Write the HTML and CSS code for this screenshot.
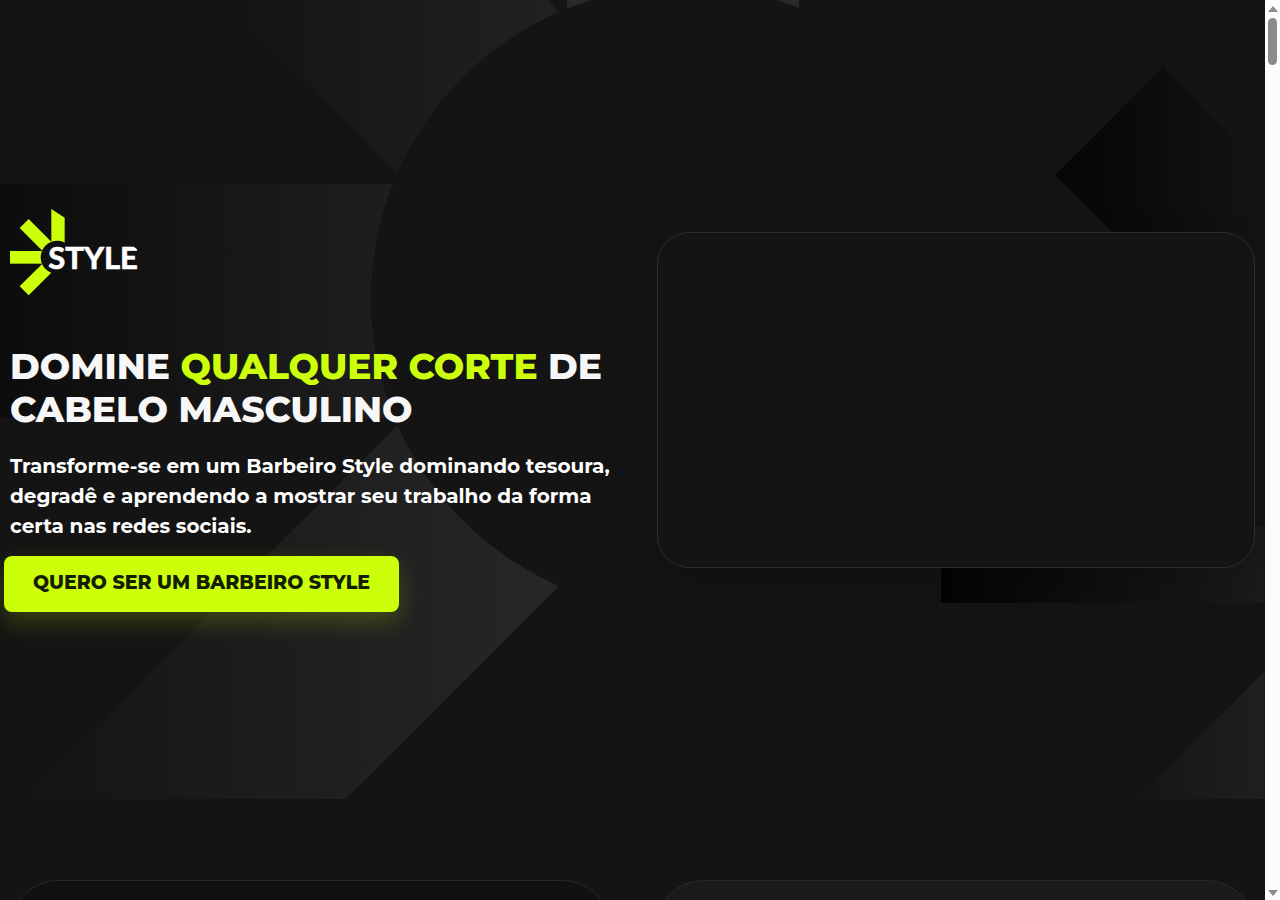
FILE: index.html
```html
<!DOCTYPE html>
<html lang="pt-BR">
<head>
  <meta charset="UTF-8">
  <meta name="viewport" content="width=device-width, initial-scale=1.0">
  <title>Barbeiro Style</title>
  <link rel="stylesheet" href="styles.css">
</head>
<body>
  <div class="page">
    <main class="content">
      <section class="hero">
        <svg class="hero-bg" viewBox="0 0 1265 800" preserveAspectRatio="xMidYMin slice" aria-hidden="true">
          <defs>
            <linearGradient id="gTop" gradientUnits="userSpaceOnUse" x1="244" y1="0" x2="560" y2="0">
              <stop offset="0" stop-color="#141414"/>
              <stop offset="1" stop-color="#212121"/>
            </linearGradient>
            <linearGradient id="gLeft" gradientUnits="userSpaceOnUse" x1="0" y1="0" x2="390" y2="0">
              <stop offset="0" stop-color="#0c0c0c"/>
              <stop offset="1" stop-color="#1e1e1e"/>
            </linearGradient>
            <linearGradient id="gBottom" gradientUnits="userSpaceOnUse" x1="30" y1="0" x2="558" y2="0">
              <stop offset="0" stop-color="#141414"/>
              <stop offset="1" stop-color="#272727"/>
            </linearGradient>
            <linearGradient id="gDiamond" gradientUnits="userSpaceOnUse" x1="1055" y1="0" x2="1265" y2="0">
              <stop offset="0" stop-color="#050505"/>
              <stop offset="1" stop-color="#141414"/>
            </linearGradient>
            <linearGradient id="gBar" gradientUnits="userSpaceOnUse" x1="941" y1="0" x2="1265" y2="0">
              <stop offset="0" stop-color="#040404"/>
              <stop offset="1" stop-color="#1b1b1b"/>
            </linearGradient>
            <linearGradient id="gCorner" gradientUnits="userSpaceOnUse" x1="1137" y1="0" x2="1265" y2="0">
              <stop offset="0" stop-color="#151515"/>
              <stop offset="1" stop-color="#1f1f1f"/>
            </linearGradient>
          </defs>
          <polygon points="224,0 547,0 722,175 399,175" fill="url(#gTop)"/>
          <rect x="567" y="-10" width="232" height="100" fill="#292929"/>
          <rect x="0" y="184" width="420" height="234" fill="url(#gLeft)"/>
          <polygon points="397,426 558,587 346,799 24,799" fill="url(#gBottom)"/>
          <circle cx="684" cy="299" r="313" fill="#141414"/>
          <polygon points="1055,175 1163,67 1290,194 1182,302" fill="url(#gDiamond)"/>
          <rect x="941" y="527" width="324" height="76" fill="url(#gBar)"/>
          <polygon points="1137,799 1265,671 1265,799" fill="url(#gCorner)"/>
        </svg>

        <div class="hero-text">
          <svg class="logo" viewBox="0 0 390 261" role="img" aria-label="Style">
            <g fill="#ccff0a">
              <polygon points="124,0 164,26 164,120 124,120"/>
              <polygon points="56,30 130,104 103,131 29,57"/>
              <rect x="0" y="126" width="120" height="38"/>
              <polygon points="103,158 130,185 56,259 29,232"/>
            </g>
            <circle cx="142" cy="145" r="50" fill="#0f0f0f"/>
            <text class="logo-text" x="115" y="180">STYLE</text>
            <polygon points="362,106 388,106 388,126" fill="#101010"/>
          </svg>
          <h1>DOMINE <span>QUALQUER CORTE</span> DE CABELO MASCULINO</h1>
          <p>Transforme-se em um Barbeiro Style dominando tesoura, degradê e aprendendo a mostrar seu trabalho da forma certa nas redes sociais.</p>
          <a class="cta" href="#oferta">QUERO SER UM BARBEIRO STYLE</a>
        </div>

        <div class="video"></div>
      </section>

      <section class="cards" id="oferta">
        <div class="card card-dark"></div>
        <div class="card card-light"></div>
      </section>
    </main>

    <div class="scrollbar" aria-hidden="true">
      <div class="arrow arrow-up"></div>
      <div class="thumb"></div>
      <div class="arrow arrow-down"></div>
    </div>
  </div>
</body>
</html>
```
FILE: styles.css
```css
* {
  box-sizing: border-box;
}
body {
  margin: 0;
  background-color: #141414;
  color: #fff;
  font-family: Montserrat, Inter, sans-serif;
}
.page {
  display: flex;
  height: 100vh;
  overflow: hidden;
}
.content {
  flex: 1;
  min-width: 0;
  overflow: hidden;
}

/* hero */
.hero {
  position: relative;
  display: grid;
  grid-template-columns: 1fr 1fr;
  gap: 24px;
  align-items: center;
  min-height: 800px;
  padding: 0 10px;
}
.hero-bg {
  position: absolute;
  top: 0;
  left: 0;
  width: 100%;
  height: 100%;
}
.hero-text {
  position: relative;
  padding-top: 20px;
}
.logo {
  display: block;
  width: 130px;
  height: 87px;
  margin-bottom: 49px;
}
.logo-text {
  font-family: Lato, sans-serif;
  font-size: 93px;
  font-weight: 700;
  fill: #fff;
  stroke: #fff;
  stroke-width: 2px;
}
h1 {
  margin: 0 0 20px;
  color: #f7f7f7;
  font-size: 36px;
  font-weight: 800;
  line-height: 43px;
}
h1 span {
  color: #ccff0a;
}
p {
  margin: 0;
  font-size: 20px;
  font-weight: 700;
  line-height: 30px;
}
.cta {
  display: inline-block;
  margin: 15px 0 0 -6px;
  padding: 0 29px 2px;
  border-radius: 8px;
  background-color: #ccff0a;
  box-shadow: 0 10px 24px rgba(204, 255, 10, 0.2);
  color: #141e00;
  font-size: 19px;
  font-weight: 800;
  line-height: 54px;
  text-decoration: none;
}
.video {
  position: relative;
  aspect-ratio: 16 / 9;
  margin-left: 12px;
  border: 1px solid #2d2d2d;
  border-radius: 32px;
  background-color: #141414;
  box-shadow: 0 24px 48px rgba(0, 0, 0, 0.15);
}

/* cards */
.cards {
  display: grid;
  grid-template-columns: 1fr 1fr;
  gap: 44px;
  padding: 80px 10px;
}
.card {
  height: 400px;
  border: 1px solid #292929;
  border-radius: 48px;
}
.card-dark {
  background-color: #111;
}
.card-light {
  background-color: #1b1b1b;
}

/* scrollbar */
.scrollbar {
  display: flex;
  flex-direction: column;
  align-items: center;
  width: 15px;
  padding: 6px 0 4px;
  background-color: #fcfcfc;
}
.arrow {
  border: 5px solid transparent;
}
.arrow-up {
  border-top: 0;
  border-bottom: 6px solid #8b8b8b;
}
.arrow-down {
  margin-top: auto;
  border-bottom: 0;
  border-top: 6px solid #8b8b8b;
}
.thumb {
  width: 9px;
  height: 47px;
  margin-top: 6px;
  border-radius: 5px;
  background-color: #8b8b8b;
}
```
